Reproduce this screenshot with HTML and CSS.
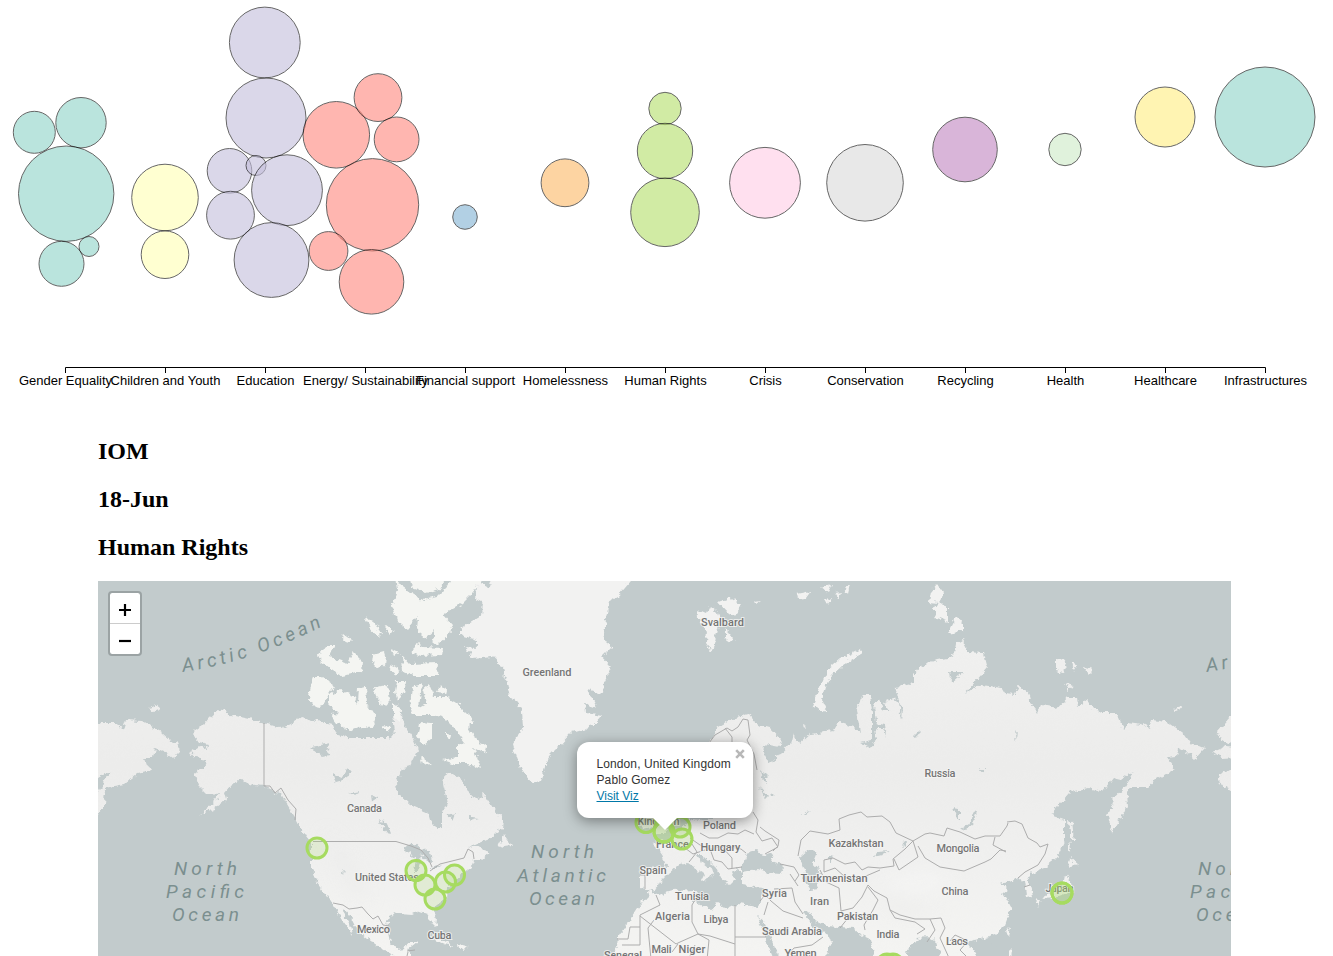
FILE: index.html
```html
<!DOCTYPE html>
<html lang="en">
<head>
<meta charset="utf-8">
<title>Projects by cause</title>
<link rel="stylesheet" href="styles.css">
</head>
<body>
<svg class="chart" viewBox="0 0 1333 417">
  <g class="bubbles">
    <g class="teal"><circle cx="34.3" cy="132.3" r="21"/><circle cx="81" cy="122.7" r="25.2"/><circle cx="66.2" cy="193.7" r="47.7"/><circle cx="61.5" cy="263.8" r="22.5"/><circle cx="89" cy="246.5" r="10"/><circle cx="1265" cy="117" r="50"/></g>
    <g class="yellow"><circle cx="165" cy="197.5" r="33.3"/><circle cx="165" cy="254.7" r="23.8"/></g>
    <g class="lilac"><circle cx="264.8" cy="42.5" r="35.4"/><circle cx="266" cy="118" r="40"/><circle cx="229.5" cy="170.8" r="22.3"/><circle cx="256" cy="165.5" r="10"/><circle cx="287" cy="190.2" r="35.4"/><circle cx="230.5" cy="215.2" r="23.9"/><circle cx="271.5" cy="260" r="37.4"/></g>
    <g class="red"><circle cx="336.3" cy="134.8" r="33.3"/><circle cx="378" cy="97.6" r="23.9"/><circle cx="396.6" cy="139.4" r="22.4"/><circle cx="372.5" cy="204.8" r="46.2"/><circle cx="328.5" cy="251" r="19.4"/><circle cx="371.5" cy="281.8" r="32.3"/></g>
    <circle class="blue" cx="465" cy="217" r="12.3"/>
    <circle class="orange" cx="565" cy="182.8" r="23.9"/>
    <g class="green"><circle cx="665" cy="108.5" r="16.2"/><circle cx="665" cy="151" r="27.7"/><circle cx="665" cy="212.3" r="34.3"/></g>
    <circle class="pink" cx="765" cy="182.8" r="35.4"/>
    <circle class="gray" cx="865" cy="182.8" r="38.3"/>
    <circle class="purple" cx="965" cy="149.5" r="32.3"/>
    <circle class="mint" cx="1065" cy="149.5" r="16.2"/>
    <circle class="gold" cx="1165" cy="117" r="30"/>
  </g>
  <path class="axis" d="M65.5 373V367.5H1265.5V373M165.5 367V373M265.5 367V373M365.5 367V373M465.5 367V373M565.5 367V373M665.5 367V373M765.5 367V373M865.5 367V373M965.5 367V373M1065.5 367V373M1165.5 367V373"/>
  <g class="ticks">
    <text x="65.5" y="385">Gender Equality</text><text x="165.5" y="385">Children and Youth</text><text x="265.5" y="385">Education</text><text x="365.5" y="385">Energy/ Sustainability</text><text x="465.5" y="385">Financial support</text><text x="565.5" y="385">Homelessness</text><text x="665.5" y="385">Human Rights</text><text x="765.5" y="385">Crisis</text><text x="865.5" y="385">Conservation</text><text x="965.5" y="385">Recycling</text><text x="1065.5" y="385">Health</text><text x="1165.5" y="385">Healthcare</text><text x="1265.5" y="385">Infrastructures</text>
  </g>
</svg>
<main class="details">
  <h2>IOM</h2>
  <h2>18-Jun</h2>
  <h2>Human Rights</h2>
  <div class="map">
    <svg class="world" viewBox="98 581 1133 375">
      <defs>
        <filter id="coast" filterUnits="userSpaceOnUse" x="90" y="570" width="1150" height="400" color-interpolation-filters="sRGB">
          <feTurbulence type="fractalNoise" baseFrequency="0.18" numOctaves="3" seed="4" result="n"/>
          <feDisplacementMap in="SourceGraphic" in2="n" scale="7" xChannelSelector="R" yChannelSelector="G"/>
        </filter>
        <filter id="soft" x="-20%" y="-20%" width="140%" height="140%"><feGaussianBlur stdDeviation="9"/></filter>
        <linearGradient id="ground" gradientUnits="userSpaceOnUse" x1="0" y1="640" x2="0" y2="956">
          <stop offset="0" stop-color="#f0f0ef"/><stop offset=".4" stop-color="#ececeb"/><stop offset=".72" stop-color="#f0f0ef"/><stop offset="1" stop-color="#f4f4f2"/>
        </linearGradient>
        <path id="arctic-west" d="M183 672Q252 662 325 625"/>
        <path id="arctic-east" d="M1207 672Q1276 662 1349 625"/>
      </defs>
      <g filter="url(#coast)">
        <g class="land">
          <!-- Chukotka, west edge -->
          <path d="M90 728L101 723 118 723 123 729 126 720 141 721 161 732 170 740 178 743 181 750 173 758 165 752 155 748 153 758 143 758 151 770 138 773 125 784 105 788 104 806 98 815 90 815V790L98 792 110 771 98 778H90Z"/>
          <path d="M149 708L156 705 161 709 154 712Z"/>
          <!-- North America -->
          <path d="M220 709L209 718 204 724 193 732 200 742 208 744 206 749 198 747 190 752 195 758 206 760 207 765 198 770 195 775 198 785 206 793 219 794 213 804 198 815 213 809 227 799 225 792 231 785 241 780 248 784 264 786 275 793 281 794 290 809 296 819 305 836 311 843 311 867 316 882 328 897 335 908 343 922 352 934 350 924 342 912 344 909 350 916 358 932 367 939 380 948 397 958 420 965 407 950 417 942 408 942 405 949 397 950 390 942 387 928 389 917 397 913 413 914 419 911 428 914 432 923 436 927 437 919 433 912 436 905 447 897 448 888 453 882 463 873 471 867 474 860 481 860 490 852 483 850 480 846 468 848 487 840 503 828 504 820 493 808 483 792 480 799 472 797 463 780 455 775 445 773 443 783 447 802 442 813 442 828 437 830 430 820 428 813 410 805 397 793 396 782 403 768 410 766 418 750 414 740 405 727 400 710 397 703 393 713 395 732 390 738 373 738 347 738 337 735 333 725 320 722 301 717 292 723 281 728 264 723 250 719 231 715Z"/>
          <path d="M498 845L504 834 512 846 505 847Z"/>
          <path d="M428 937L440 938 454 946 444 944ZM459 945L470 948 460 949Z"/>
          <!-- Canadian Arctic -->
          <g class="ice">
            <path d="M313 677L321 677 335 686 327 697 320 708 315 707 308 700Z"/>
            <path d="M328 696L340 690 353 695 358 703 359 688 366 687 367 703 376 717 372 728 360 727 350 731 337 723 330 714 338 713 328 703Z"/>
            <path d="M395 575L400 585 410 592 423 600 437 597 447 587 450 581 455 575H485L473 593 463 603 450 610 443 615 452 625 448 636 438 645 433 641 435 630 426 638 417 631 418 617 407 630 398 623 392 607 397 590Z"/>
            <path d="M409 575L412 588 426 593 440 589 446 575Z"/>
            <path d="M411 652L416 643 423 647 442 648 441 655 420 656Z"/>
            <path d="M402 655L410 664 438 663 437 676 413 676 403 672Z"/>
            <path d="M412 687L422 684 419 708 426 704 423 690 429 685 434 697 447 697 460 706 474 720 468 726 477 740 487 747 485 754 474 748 481 768 467 764 455 764 443 760 457 757 457 747 464 742 451 725 443 717 430 715 417 715 410 708Z"/>
            <path d="M420 723L432 724 432 739 424 746 417 736Z"/><path d="M446 733L451 734 450 740 446 738Z"/>
            <path d="M317 658L327 645 334 645 329 657 347 663 353 652 363 662 362 672 342 676 330 668Z"/>
            <path d="M365 616L373 620 382 634 377 636 368 626ZM344 634L352 640 349 643 343 640ZM387 625L394 630 391 635 386 630ZM373 655L384 652 387 662 378 670 372 662ZM392 665L399 669 396 675 390 670ZM391 649L399 653 394 656Z"/>
            <path d="M374 687L388 685 390 700 384 706 376 697ZM396 682L406 682 404 693 397 700 394 692ZM393 703L401 708 400 722 393 716ZM440 686L447 689 446 693 437 692Z"/>
            <path d="M381 726L391 727 389 730 383 730ZM420 756L431 764 422 765Z"/>
          </g>
          <!-- Greenland -->
          <path class="snow" d="M493 575L489 588 478 582 475 599 483 603 482 615 460 628 460 635 477 640 477 648 465 647 473 658 492 656 502 667 507 683 510 697 518 702 522 711 523 727 513 743 517 757 522 770 526 776 532 783 540 781 545 767 548 757 558 747 572 732 593 726 602 716 585 713 584 703 597 708 588 690 602 694 603 684 611 667 602 657 612 647 603 640 607 613 609 602 617 597 625 588 636 575Z"/>
          <!-- Svalbard and Franz Josef Land -->
          <path class="snow" d="M697 610L706 614 710 606 717 612 720 620 717 633 712 652 706 643 707 632 698 618ZM718 602L730 598 742 605 735 615 727 612ZM725 628L733 638 731 642 725 638ZM754 602L760 601 756 604Z"/>
          <path class="snow" d="M796 594L811 591 806 598 799 599ZM821 587L832 584 828 592ZM834 593L842 592 838 599ZM844 588L850 584 848 593ZM825 599L832 598 828 604Z"/>
          <!-- Europe, Asia and Africa -->
          <path d="M706 760L712 738 717 727 733 718 751 713 754 723 770 727 782 740 780 748 764 745 763 752 770 763 775 756 781 754 790 744 793 733 799 744 810 734 833 731 838 722 853 727 860 733 857 710 862 695 870 695 872 713 872 740 860 743 870 748 877 739 875 728 884 728 887 738 885 725 876 723 874 705 880 698 883 711 890 711 884 702 892 698 899 703 902 720 903 708 895 693 896 687 913 683 913 675 920 667 937 660 948 658 955 653 957 643 962 640 968 652 983 653 987 668 975 682 965 694 982 685 1002 688 1005 693 1015 694 1018 687 1028 692 1030 700 1037 712 1042 705 1058 708 1067 697 1077 697 1078 707 1087 700 1092 708 1102 712 1117 712 1123 728 1128 723 1142 725 1149 729 1152 720 1167 722 1185 735 1192 745 1205 748 1195 759 1187 752 1178 748 1177 757 1167 758 1175 769 1155 780 1147 787 1130 787 1127 793 1128 807 1118 822 1112 832 1108 815 1113 800 1125 787 1133 772 1122 780 1113 778 1102 792 1088 788 1070 792 1050 815 1065 820 1065 840 1057 857 1045 867 1033 872 1028 877 1033 895 1026 896 1024 882 1016 878 1005 883 1000 882 1008 889 1003 893 1011 908 1005 925 995 935 985 938 973 940 967 942 975 952 977 965 600 970 617 947 618 938 630 920 638 908 647 897 650 891 640 887 640 868 667 867 662 852 653 843 668 840 690 820 706 815Z"/>
          <path d="M640 815L665 815 666 834 652 834 655 827 642 830Z"/>
          <path class="snow" d="M860 649L861 654 843 665 832 675 825 688 822 700 827 713 817 710 813 703 820 687 827 670 840 659 855 652Z"/>
          <path class="snow" d="M937 584L943 593 940 603 929 602 931 591ZM933 608L940 603 948 608 948 622 937 618ZM948 634L957 616 963 623 963 631Z"/>
          <path d="M1056 660L1062 658 1067 664 1063 673 1056 671ZM1072 663L1077 665 1074 671ZM1082 667L1092 670 1088 674ZM1065 684L1073 687 1069 690ZM1173 708L1183 706 1179 711ZM803 724L807 726 804 729Z"/>
          <path d="M1240 710L1230 717 1217 732 1223 742 1240 745ZM1213 752L1225 747 1240 748V757L1222 758ZM1240 763L1220 775 1218 782 1240 796Z"/>
          <path d="M1068 821L1072 822 1074 840 1070 840 1070 833ZM1069 842L1071 848 1069 851ZM1070 858L1078 865 1067 868ZM1065 874L1069 880 1072 892 1058 897 1042 898 1052 892 1063 885ZM1036 901L1041 900 1038 906ZM1010 927L1008 937 1006 932ZM1008 949L1012 950 1011 960 1008 960Z"/>
        </g>
        <g class="water">
          <path d="M650 891L658 888 662 880 667 875 677 866 688 863 694 867 704 875 701 881 708 880 713 872 703 864 697 855 704 855 717 868 722 880 730 885 735 880 731 872 738 869 742 873 742 885 763 888 762 899 757 907 738 904 728 909 717 903 712 910 693 902 696 890 673 891 658 895Z"/>
          <path d="M742 866L747 853 756 850 764 856 773 853 771 862 784 867 780 874 767 873 757 869 742 872Z"/>
          <path d="M800 857L810 850 817 853 813 863 820 871 817 882 819 889 810 890 803 880 806 872Z"/>
          <path d="M803 911L809 911 815 921 826 926 853 928 861 935 870 939 876 960 823 960 832 943 830 935 822 932 812 925Z"/>
          <path d="M758 917L764 922 773 942 780 960 774 960 765 938Z"/>
          <path d="M906 953L917 938 929 937 936 941 942 960 906 960Z"/>
          <path d="M976 960L973 948 967 942 985 938 1000 950V960Z"/>
          <path d="M680 816L704 815 720 817 703 821 690 820Z"/>
          <path d="M764 746L775 752 775 763 766 758ZM760 787L768 796 765 799ZM771 792L774 797 771 797Z"/>
          <path d="M760 770L767 777 767 783 762 778ZM770 793L775 797 771 796ZM803 813L810 811 805 815ZM960 829L969 823 976 811 978 812 974 822 964 831ZM953 807L959 808 959 822 955 812ZM979 768L985 768 984 774ZM874 857L876 852 891 851 882 855ZM830 855L834 856 830 862ZM901 843L907 842 905 847ZM913 738L920 731 918 737Z"/>
          <path d="M949 672L955 672 965 672 959 677 953 682 950 678ZM1015 736L1017 729 1016 742Z"/>
          <path d="M310 747L321 745 330 743 327 751 331 755 322 756ZM333 774L341 777 350 768 352 773 343 780 336 782ZM348 793L360 791 355 795ZM378 821L386 822 392 834 388 833ZM371 795L378 798 372 802ZM403 850L413 842 423 851 430 850 432 862 424 860 421 854 418 872 414 872 416 858ZM428 869L442 864 436 869ZM448 815L455 813 452 821ZM470 817L478 818 470 820ZM342 872L345 871 344 875Z"/>
        </g>
      </g>
      <g class="relief" filter="url(#soft)">
        <path class="low" d="M323 830L350 860 370 900 350 890Z"/><path class="high" d="M880 880L930 870 960 885 900 895Z"/><path class="low" d="M875 890L940 912 900 915Z"/>
      </g>
      <g class="borders">
        <path d="M264 723V786L270 786 275 793 281 788 288 800 296 809 295 820M313 841.500H396L411 846 421 850 428 858 432 867M430 871L440 864 452 861 464 858 468 849 473 852 474 859M333 903L343 905 349 909 357 908 362 907 368 914 373 919 378 916 383 925 389 926M408 952L406 960M407 951L415 950"/>
        <path d="M709 743L715 735 727 728 732 731 738 727 743 719 748 720 750 735 747 740 754 754M725 728L732 737V745M754 754L757 770M753 812L758 820 756 832 762 841 772 838 778 847 765 854M700 833L709 838 718 838 728 833 738 834 745 830 754 834M690 838L700 845 710 849 725 846 741 849 746 853M685 848L693 854 705 850M710 849L714 860 722 862 728 869 742 867M722 847L732 858 732 868M692 844L697 852 689 862M640 875H645V889M656 895L660 905 654 908 640 915 640 927 630 927 628 939 617 939M640 916L676 944 680 942 698 934 692 922 692 905 695 900M654 920L648 928 651 959M698 934L710 936 735 944 735 905M735 937H766M735 944V960M698 934L709 940 707 960M640 927V945H622M672 952L678 944M690 956L695 945"/>
        <path d="M760 827L765 831 779 840 778 846 773 851M780 864L794 867 799 875 795 881M798 856L801 840 810 831 828 834 840 830 839 819 849 815 861 812 867 817 882 816 890 822 896 833 913 841 905 849 893 859 894 866 880 868 868 867 862 870 855 862 845 864 833 858 824 860V872M824 872L835 868 845 877 860 881 866 876 880 870M820 870L826 882 839 888 841 911 853 908 862 897 868 885M841 911L848 918 840 928M868 885L874 891 887 898 890 910 900 915 915 919 930 919 941 918M868 887L878 900 873 910 864 925 865 930M774 889L792 888 795 902 803 914M760 901L765 895 771 901 783 911 803 918M764 915L768 902M790 874L798 886M894 859L899 870 918 857 913 841 925 834 930 833 944 836 947 828 960 832 975 839 985 836 1000 836 1007 826 1008 823M918 846L925 858 940 867 964 871 985 862 991 859 1000 850 1006 851M1007 822L1015 821 1022 824 1028 838 1037 843 1040 847 1048 844 1045 854 1038 865 1025 872 1018 878M1024 887L1030 885M995 837L993 845 1006 852M890 910L895 918 915 922 925 929 917 934M930 919L935 930 927 942M941 918L945 928 940 938 950 960M950 941L955 935 968 941 960 950 970 960M783 960L794 948 812 945 823 937"/>
      </g>
      <g class="seas">
        <text><textPath href="#arctic-west" textLength="147">Arctic Ocean</textPath></text>
        <text x="174" y="875" textLength="63">North</text><text x="166" y="898" textLength="78">Pacific</text><text x="172" y="921" textLength="67">Ocean</text>
        <text x="531" y="858" textLength="63">North</text><text x="517" y="882" textLength="89">Atlantic</text><text x="529" y="905" textLength="66">Ocean</text>
        <text><textPath href="#arctic-east" textLength="147">Arctic Ocean</textPath></text><text x="1198" y="875" textLength="63">North</text><text x="1190" y="898" textLength="78">Pacific</text><text x="1196" y="921" textLength="67">Ocean</text>
      </g>
      <g class="countries">
        <text x="547" y="676" textLength="49">Greenland</text><text x="722.500" y="626" textLength="43">Svalbard</text><text x="364.500" y="812" textLength="35">Canada</text><text x="387" y="881" textLength="64">United States</text><text x="373.500" y="933" textLength="33">Mexico</text><text x="439.500" y="939" textLength="24">Cuba</text><text x="940" y="777" textLength="31">Russia</text><text x="719.500" y="829" textLength="33">Poland</text><text x="658.500" y="825" textLength="42">Kingdom</text><text x="672.500" y="848" textLength="33">France</text><text x="720.500" y="851" textLength="40">Hungary</text><text x="653" y="874" textLength="27">Spain</text><text x="692" y="900" textLength="34">Tunisia</text><text x="672.500" y="920" textLength="35">Algeria</text><text x="716" y="923" textLength="25">Libya</text><text x="661.500" y="953" textLength="20">Mali</text><text x="692" y="953" textLength="27">Niger</text><text x="623" y="959" textLength="38">Senegal</text><text x="774.500" y="897" textLength="25">Syria</text><text x="819.500" y="905" textLength="19">Iran</text><text x="834" y="882" textLength="67">Turkmenistan</text><text x="856" y="847" textLength="55">Kazakhstan</text><text x="958" y="852" textLength="43">Mongolia</text><text x="955" y="895" textLength="27">China</text><text x="857.500" y="920" textLength="41">Pakistan</text><text x="888" y="938" textLength="23">India</text><text x="792" y="935" textLength="60">Saudi Arabia</text><text x="800.500" y="957" textLength="32">Yemen</text><text x="957" y="945" textLength="22">Laos</text><text x="1059.500" y="892" textLength="28">Japan</text>
      </g>
      <g class="markers">
        <circle cx="317" cy="848" r="10"/><circle cx="416" cy="870.500" r="10"/><circle cx="425" cy="885" r="10"/><circle cx="445.500" cy="882" r="10"/><circle cx="454.500" cy="875" r="10"/><circle cx="435" cy="899" r="10"/><circle cx="646" cy="822.500" r="10"/><circle cx="664" cy="832" r="10"/><circle cx="664" cy="832" r="10"/><circle cx="680" cy="827" r="10"/><circle cx="682" cy="839" r="10"/><circle cx="1062" cy="893" r="10"/><circle cx="1062" cy="893" r="10"/><circle cx="887" cy="964" r="10"/><circle cx="893" cy="964" r="10"/>
      </g>
    </svg>
    <div class="zoom">
      <a class="zoom-btn"><svg viewBox="0 0 14 14"><path d="M7 1V13M1 7H13"/></svg></a>
      <a class="zoom-btn"><svg viewBox="0 0 14 14"><path d="M1 7H13"/></svg></a>
    </div>
    <div class="popup">
      <div class="tip"></div>
      <div class="bubble">London, United Kingdom<br>Pablo Gomez<br><a class="link">Visit Viz</a>
        <svg class="close" viewBox="0 0 10 10"><path d="M1.200 1.200L8.800 8.800M8.800 1.200L1.200 8.800"/></svg>
      </div>
    </div>
  </div>
</main>
</body>
</html>
```
FILE: styles.css
```css
body { margin: 0; height: 956px; overflow: hidden; background: #fff; color: #000; }
.chart { display: block; width: 1333px; height: 417px; }
.bubbles circle { stroke: #000; stroke-width: 1; opacity: .6; }
.teal { fill: #8dd3c7; }
.yellow { fill: #ffffb3; }
.lilac { fill: #c3bedb; }
.red { fill: #ff877c; }
.blue { fill: #80b1d3; }
.orange { fill: #fdb866; }
.green { fill: #b3de69; }
.pink { fill: #ffcde5; }
.gray { fill: #d9d9d9; }
.purple { fill: #c084c0; }
.mint { fill: #ccebc5; }
.gold { fill: #ffed80; }
.axis { fill: none; stroke: #000; }
.ticks { font: 13px "Liberation Sans", Arial, sans-serif; text-anchor: middle; }
.details { padding: 0 102px 0 98px; }
h2 { margin: 20px 0; font: bold 24px/28px "Liberation Serif", "Times New Roman", serif; }
.map { position: relative; height: 375px; overflow: hidden; background: #c2cbcc; }
.world { display: block; width: 1133px; height: 375px; }
.land { fill: url(#ground); }
.ice { fill: #f4f5f2; }
.snow { fill: #f2f2f1; }
.water { fill: #c2cbcc; }
.relief { opacity: .5; }
.low { fill: #e8e8e7; }
.high { fill: #f8f8f7; }
.borders { fill: none; stroke: #adadad; stroke-width: 1; stroke-linejoin: round; }
.seas { font: italic 19px Roboto, sans-serif; fill: #7b8f8f; }
.countries { font: 500 11px Roboto, sans-serif; fill: #757575; stroke: #f4f4f3; stroke-width: 2px; stroke-opacity: .8; paint-order: stroke; text-anchor: middle; }
.markers { fill: #a6d96a; fill-opacity: .2; stroke: #a6db60; stroke-width: 3; }
.zoom { position: absolute; left: 10px; top: 10px; width: 30px; display: flex; flex-direction: column; background: #fff; background-clip: padding-box; border: 2px solid #9ba3a4; border-radius: 4px; }
.zoom-btn { display: flex; box-sizing: border-box; height: 30px; align-items: center; justify-content: center; padding-top: 4px; }
.zoom-btn + .zoom-btn { border-top: 1px solid #ccc; height: 31px; padding-top: 3px; }
.zoom-btn svg { width: 14px; height: 14px; fill: none; stroke: #000; stroke-width: 2.2; }
.popup { position: absolute; left: 479px; top: 161px; width: 176px; height: 96px; }
.bubble { position: relative; box-sizing: border-box; height: 76px; padding: 14px 0 0 19.500px; border-radius: 12px; background: #fff; box-shadow: 0 3px 14px rgba(0,0,0,.4); color: #333; font: 12px/16px "Liberation Sans", Arial, sans-serif; letter-spacing: .1px; white-space: nowrap; }
.link { color: #0078a8; text-decoration: underline; letter-spacing: 0; }
.tip { position: absolute; z-index: 1; left: 75px; top: 75px; width: 26px; height: 13px; background: #fff; clip-path: polygon(0 0, 100% 0, 50% 100%); }
.close { position: absolute; right: 8px; top: 7px; width: 10px; height: 10px; fill: none; stroke: #b8b8b8; stroke-width: 2.600; }
```
